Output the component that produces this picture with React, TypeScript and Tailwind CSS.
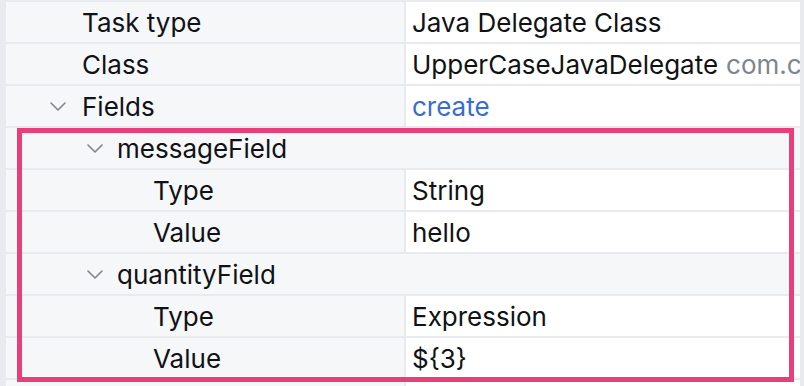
type Row =
  | { kind: 'prop'; level: number; label: string; value?: string; hint?: string; link?: boolean; chevron?: boolean }
  | { kind: 'group'; level: number; label: string }

const rows: Row[] = [
  { kind: 'prop', level: 0, label: 'Task type', value: 'Java Delegate Class' },
  { kind: 'prop', level: 0, label: 'Class', value: 'UpperCaseJavaDelegate', hint: 'com.c' },
  { kind: 'prop', level: 0, label: 'Fields', value: 'create', link: true, chevron: true },
  { kind: 'group', level: 1, label: 'messageField' },
  { kind: 'prop', level: 2, label: 'Type', value: 'String' },
  { kind: 'prop', level: 2, label: 'Value', value: 'hello' },
  { kind: 'group', level: 1, label: 'quantityField' },
  { kind: 'prop', level: 2, label: 'Type', value: 'Expression' },
  { kind: 'prop', level: 2, label: 'Value', value: '${3}' },
  { kind: 'prop', level: 0, label: '', value: '' },
]

function Chevron() {
  return (
    <svg width="16" height="9" viewBox="0 0 16 9" fill="none" className="shrink-0">
      <path d="M1 1l7 7 7-7" stroke="#80848c" strokeWidth="1.6" strokeLinecap="round" strokeLinejoin="round" />
    </svg>
  )
}

const indent = ['pl-[44px]', 'pl-[81px]', 'pl-[147px]']

export default function App() {
  return (
    <div
      className="relative w-[804px] h-[386px] overflow-hidden bg-[#e9eaee] pl-[6px] pr-[4px] pt-[2px] text-[26px] text-[#111215]"
      style={{ fontFamily: 'Inter, "Noto Sans", sans-serif' }}
    >
      <div className="flex flex-col gap-[2px]">
        {rows.map((row, i) =>
          row.kind === 'group' ? (
            <div key={i} className={`flex h-10 items-center gap-[14px] bg-[#f6f7f9] ${indent[row.level]}`}>
              <Chevron />
              <span>{row.label}</span>
            </div>
          ) : (
            <div key={i} className="flex h-10 gap-[2px]">
              <div className={`flex w-[398px] shrink-0 items-center bg-[#f6f7f9] ${indent[row.level]}`}>
                {row.chevron ? (
                  <span className="flex items-center gap-[16px]">
                    <Chevron />
                    <span>{row.label}</span>
                  </span>
                ) : (
                  <span className={row.level === 0 ? 'pl-[32px]' : ''}>{row.label}</span>
                )}
              </div>
              <div className="flex flex-1 items-center overflow-hidden whitespace-nowrap bg-white pl-[6px]">
                <span className={row.link ? 'text-[#3a6cd0]' : ''}>{row.value}</span>
                {row.hint && <span className="ml-[8px] text-[#80848c]">{row.hint}</span>}
              </div>
            </div>
          ),
        )}
      </div>
      <div className="pointer-events-none absolute left-[17px] top-[128px] h-[254px] w-[777px] border-[5px] border-[#e83f7a]" />
    </div>
  )
}
